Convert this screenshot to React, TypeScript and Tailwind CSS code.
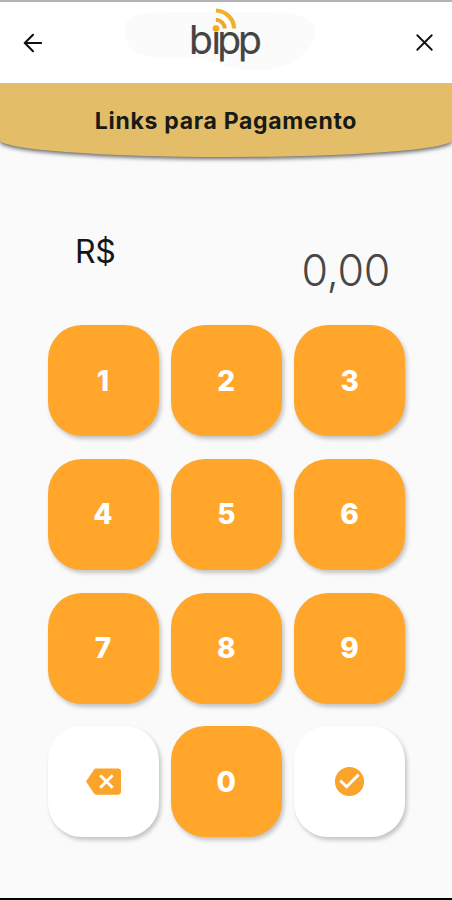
import { ArrowLeft, X } from 'lucide-react';
import { MdBackspace, MdCheckCircle } from 'react-icons/md';
import { useState } from 'react';

const KEYS = ['1', '2', '3', '4', '5', '6', '7', '8', '9'];

const KEY_CLASS =
  'flex h-[111px] w-[111px] items-center justify-center rounded-[34px] shadow-[2px_3px_4px_rgba(0,0,0,0.22)]';

function Logo() {
  return (
    <svg width="190" height="68" viewBox="0 0 190 68" role="img" aria-label="bipp">
      <path d="M0 24C0 12 14 8 50 8h92c34 0 48 6 48 20 0 18-24 39-58 39-28 0-42-11-62-14H30C8 53 0 42 0 24Z" fill="#fbfbfb" />
      <text x="64 86.4 92.3 113" y="50" fontFamily="Inter, sans-serif" fontSize="39" fontWeight="400" fill="#444" stroke="#444" strokeWidth="0.2">
        bipp
      </text>
      <rect x="86" y="18" width="10" height="9.8" fill="#fbfbfb" />
      <circle cx="91" cy="24.5" r="3.3" fill="#efab1c" />
      <path d="M91 15.8a9.5 9.5 0 0 1 9 8.7" fill="none" stroke="#efa827" strokeWidth="4" />
      <path d="M91 6.5a19 19 0 0 1 18.2 18" fill="none" stroke="#efb02a" strokeWidth="4.2" />
    </svg>
  );
}

export default function App() {
  const [cents, setCents] = useState(0);

  const amount = (cents / 100).toFixed(2).replace('.', ',');

  const handleDigit = (digit: string) => {
    setCents(cents * 10 + Number(digit));
  };

  return (
    <div className="flex h-[900px] w-[452px] flex-col overflow-hidden border-t-2 border-b-2 border-t-[#b3b3b3] border-b-black bg-[#fafafa] font-['Inter',sans-serif]">
      <header className="z-10 flex h-[81px] shrink-0 items-start bg-white pr-[13px] pl-[19px]">
        <button type="button" aria-label="Voltar" className="mt-[27px]">
          <ArrowLeft size={28} strokeWidth={1.8} color="#111" />
        </button>
        <div className="mt-[2px] mr-auto ml-[78px]">
          <Logo />
        </div>
        <button type="button" aria-label="Fechar" className="mt-[26px]">
          <X size={29} strokeWidth={1.5} color="#111" />
        </button>
      </header>

      <div className="flex h-[74px] shrink-0 justify-center rounded-b-[50%_17px] bg-[#e4bd68] pt-[22px] shadow-[0_2px_4px_rgba(0,0,0,0.6)]">
        <h1 className="text-[23px] leading-[32px] font-bold tracking-[0.7px] whitespace-nowrap text-[#171a17]">Links para Pagamento</h1>
      </div>

      <div className="flex h-[168px] shrink-0 justify-between pr-[62px] pl-[75px]">
        <span className="mt-[75px] text-[32px] leading-[40px] tracking-[-0.4px] text-[#161616]">R$</span>
        <span className="mt-[87px] text-[43px] leading-[52px] font-light tracking-[-0.3px] text-[#484848]">{amount}</span>
      </div>

      <div className="grid shrink-0 grid-cols-[repeat(3,111px)] gap-x-[12.3px] gap-y-[22.8px] pl-[47.5px]">
        {KEYS.map(key => (
          <button
            key={key}
            type="button"
            onClick={() => handleDigit(key)}
            className={`${KEY_CLASS} bg-[#ffa62b] text-[28px] font-extrabold text-white`}
          >
            {key}
          </button>
        ))}
        <button type="button" aria-label="Apagar" onClick={() => setCents(Math.floor(cents / 10))} className={`${KEY_CLASS} bg-white`}>
          <MdBackspace size={35} color="#fba42b" />
        </button>
        <button type="button" onClick={() => handleDigit('0')} className={`${KEY_CLASS} bg-[#ffa62b] text-[28px] font-extrabold text-white`}>
          0
        </button>
        <button type="button" aria-label="Confirmar" className={`${KEY_CLASS} bg-white`}>
          <MdCheckCircle size={35} color="#fba42b" />
        </button>
      </div>
    </div>
  );
}
